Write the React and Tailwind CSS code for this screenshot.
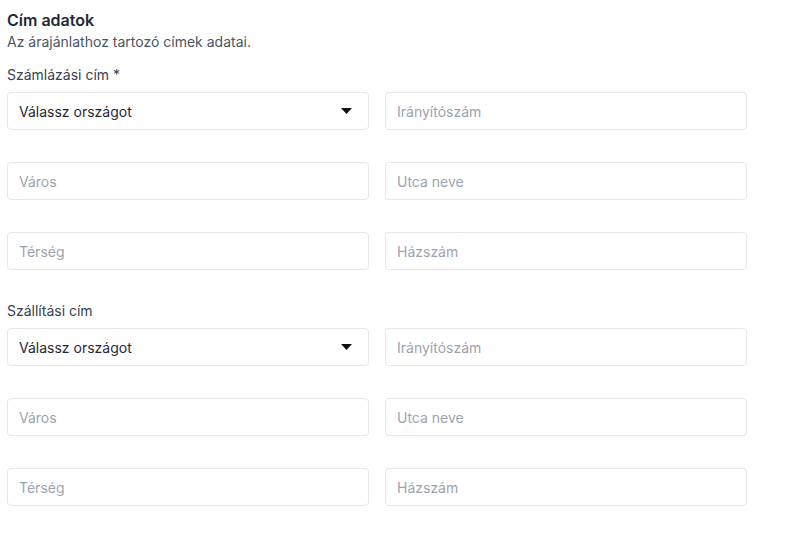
const Field = ({ placeholder }) => (
  <input
    type="text"
    placeholder={placeholder}
    className="h-[38px] w-full rounded-[4px] border border-[#e5e7eb] bg-white px-[11px] text-[14px] text-[#1f2937] placeholder:text-[#9ca3af] outline-none"
  />
);

const CountrySelect = () => (
  <div className="flex h-[38px] w-full items-center justify-between rounded-[4px] border border-[#e5e7eb] bg-white pl-[11px] pr-[16px] text-[14px] text-[#1f2937]">
    <span>Válassz országot</span>
    <svg width="11" height="6" viewBox="0 0 11 6">
      <path d="M0 0 L11 0 L5.5 6 Z" fill="#111" />
    </svg>
  </div>
);

const AddressBlock = ({ label, className }) => (
  <div className={className}>
    <div className="mb-[7px] text-[14px] leading-[20px] text-[#374151]">{label}</div>
    <div className="grid grid-cols-2 gap-x-[16px] gap-y-[32px]">
      <CountrySelect />
      <Field placeholder="Irányítószám" />
      <Field placeholder="Város" />
      <Field placeholder="Utca neve" />
      <Field placeholder="Térség" />
      <Field placeholder="Házszám" />
    </div>
  </div>
);

export default function App() {
  return (
    <div
      className="min-h-[544px] w-[792px] bg-white pl-[7px] pt-[10px]"
      style={{ fontFamily: "Inter, 'Noto Sans', sans-serif" }}
    >
      <div className="w-[740px]">
        <h2 className="text-[16px] font-semibold leading-[20px] text-[#1f2937]">Cím adatok</h2>
        <p className="mt-[2px] text-[14px] leading-[20px] text-[#4b5563]">
          Az árajánlathoz tartozó címek adatai.
        </p>
        <AddressBlock label="Számlázási cím *" className="mt-[13px]" />
        <AddressBlock label="Szállítási cím" className="mt-[31px]" />
      </div>
    </div>
  );
}
